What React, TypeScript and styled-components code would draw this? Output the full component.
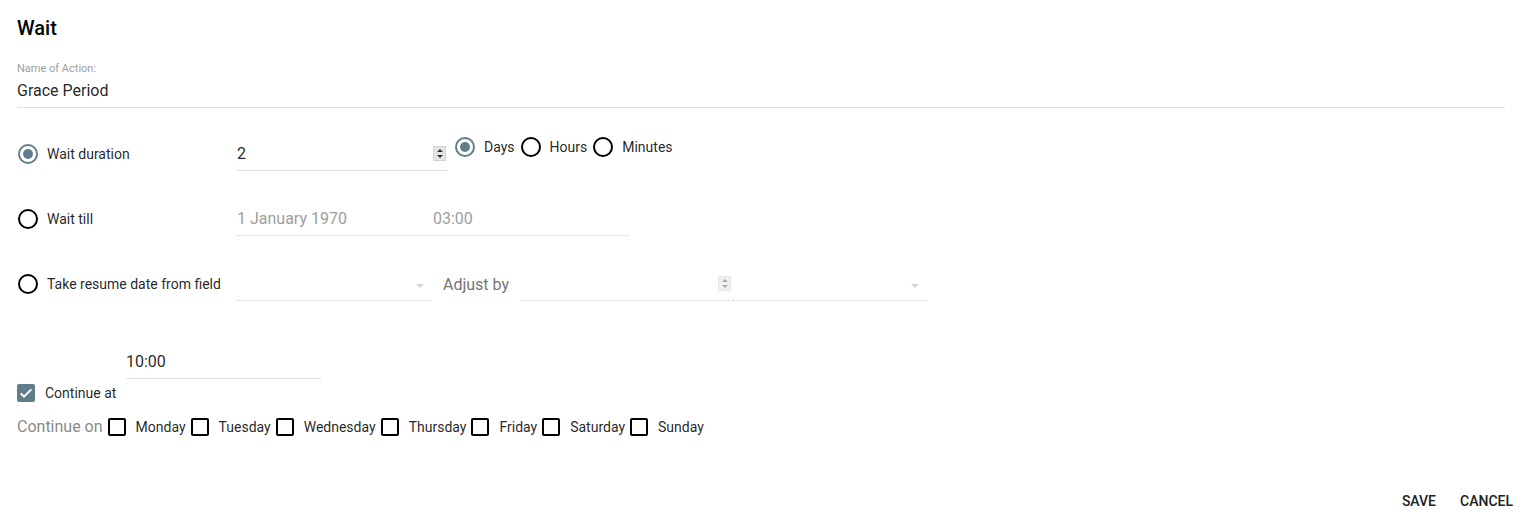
import React from "react";
import styled, { createGlobalStyle } from "styled-components";

const GlobalStyle = createGlobalStyle`
  html, body { margin: 0; padding: 0; background: #fff; }
  body { font-family: Roboto, "Liberation Sans", Arial, sans-serif; color: rgba(0,0,0,0.87); }
  * { box-sizing: border-box; }
`;

const ACCENT = "#607d8b";

const Page = styled.div`
  width: 1526px;
  height: 518px;
  padding: 16px 21px 0 17px;
  display: flex;
  flex-direction: column;
`;

const Title = styled.div`
  font-size: 20px;
  line-height: 24px;
  font-weight: 500;
  color: #000;
`;

const SmallLabel = styled.div`
  margin-top: 22px;
  font-size: 11px;
  line-height: 13px;
  color: #9e9e9e;
`;

const NameInput = styled.div`
  margin-top: 6px;
  font-size: 16px;
  line-height: 20px;
  padding-bottom: 6px;
  border-bottom: 1px solid #e0e0e0;
`;

const Row = styled.div<{ $top: number }>`
  display: flex;
  align-items: flex-start;
  margin-top: ${(p) => p.$top}px;
  height: 27px;
`;

const OptionLabel = styled.label`
  width: 220px;
  display: flex;
  align-items: center;
  height: 20px;
  font-size: 14px;
  line-height: 20px;
  gap: 9px;
  padding-left: 1px;
`;

const Radio = styled.span<{ $checked?: boolean }>`
  width: 20px;
  height: 20px;
  border-radius: 50%;
  border: 2px solid ${(p) => (p.$checked ? ACCENT : "#000")};
  display: inline-flex;
  align-items: center;
  justify-content: center;
  flex: none;
  &::after {
    content: "";
    width: 10px;
    height: 10px;
    border-radius: 50%;
    background: ${(p) => (p.$checked ? ACCENT : "transparent")};
  }
`;

const Field = styled.div<{ $width: number; $dotted?: boolean; $muted?: boolean }>`
  width: ${(p) => p.$width}px;
  height: 27px;
  display: flex;
  align-items: flex-start;
  font-size: 16px;
  line-height: 20px;
  padding-bottom: 6px;
  border-bottom: 1px ${(p) => (p.$dotted ? "dotted #d0d0d0" : "solid #e0e0e0")};
  color: ${(p) => (p.$muted ? "#9e9e9e" : "rgba(0,0,0,0.87)")};
  position: relative;
`;

const FieldText = styled.span<{ $width?: number }>`
  flex: ${(p) => (p.$width ? "none" : "1")};
  width: ${(p) => (p.$width ? `${p.$width}px` : "auto")};
`;

const Spinner = styled.span<{ $faded?: boolean }>`
  width: 13px;
  height: 15px;
  margin-top: 2px;
  margin-right: 2px;
  background: ${(p) => (p.$faded ? "#f0f0f0" : "#e4e4e4")};
  border: 1px solid ${(p) => (p.$faded ? "#e6e6e6" : "#d4d4d4")};
  display: flex;
  flex-direction: column;
  align-items: center;
  justify-content: space-around;
  flex: none;
`;

const Tri = styled.span<{ $down?: boolean; $faded?: boolean }>`
  width: 0;
  height: 0;
  border-left: 3px solid transparent;
  border-right: 3px solid transparent;
  ${(p) =>
    p.$down
      ? `border-top: 3px solid ${p.$faded ? "#aaa" : "#333"};`
      : `border-bottom: 3px solid ${p.$faded ? "#aaa" : "#333"};`}
`;

const SelectArrow = styled.span`
  position: absolute;
  right: 8px;
  top: 10px;
  width: 0;
  height: 0;
  border-left: 4px solid transparent;
  border-right: 4px solid transparent;
  border-top: 4px solid #d6d6d6;
`;

const UnitGroup = styled.div`
  display: flex;
  align-items: center;
  margin-top: -7px;
  margin-left: 7px;
  height: 20px;
  font-size: 14px;
  line-height: 20px;
`;

const UnitOption = styled.label`
  display: flex;
  align-items: center;
  gap: 9px;
  margin-right: 6px;
`;

const InlineLabel = styled.span`
  width: 77px;
  margin-left: 11px;
  font-size: 16px;
  line-height: 20px;
  color: #757575;
  padding-top: 1px;
`;

const TimeRow = styled.div`
  margin-top: 51px;
  padding-left: 109px;
`;

const CheckRow = styled.label`
  margin-top: 4px;
  display: flex;
  align-items: center;
  height: 20px;
  gap: 10px;
  font-size: 14px;
  line-height: 20px;
`;

const Checkbox = styled.span<{ $checked?: boolean }>`
  width: 18px;
  height: 18px;
  border-radius: 2px;
  flex: none;
  display: inline-flex;
  align-items: center;
  justify-content: center;
  background: ${(p) => (p.$checked ? ACCENT : "transparent")};
  border: ${(p) => (p.$checked ? "none" : "2px solid #000")};
`;

const DaysRow = styled.div`
  margin-top: 14px;
  display: flex;
  align-items: center;
  height: 20px;
  font-size: 14px;
  line-height: 20px;
`;

const DaysLabel = styled.span`
  font-size: 16px;
  color: #8a8a8a;
  margin-right: 5px;
`;

const DayOption = styled.label`
  display: flex;
  align-items: center;
  gap: 10px;
  margin-right: 5px;
`;

const Footer = styled.div`
  margin-top: 54px;
  margin-right: -8px;
  display: flex;
  justify-content: flex-end;
  gap: 24px;
`;

const TextButton = styled.button`
  border: none;
  background: none;
  padding: 0;
  font-family: Roboto, "Liberation Sans", Arial, sans-serif;
  font-size: 14px;
  line-height: 20px;
  font-weight: 500;
  color: #212121;
  text-transform: uppercase;
  cursor: pointer;
`;

const Check = () => (
  <svg width="16" height="16" viewBox="0 0 24 24">
    <path d="M4 12.5l5 5L20 6.5" fill="none" stroke="#fff" strokeWidth="3" />
  </svg>
);

const days = ["Monday", "Tuesday", "Wednesday", "Thursday", "Friday", "Saturday", "Sunday"];

export default function App() {
  return (
    <>
      <GlobalStyle />
      <Page>
        <Title>Wait</Title>
        <SmallLabel>Name of Action:</SmallLabel>
        <NameInput>Grace Period</NameInput>

        <Row $top={36}>
          <OptionLabel>
            <Radio $checked />
            Wait duration
          </OptionLabel>
          <Field $width={211}>
            <FieldText>2</FieldText>
            <Spinner>
              <Tri />
              <Tri $down />
            </Spinner>
          </Field>
          <UnitGroup>
            <UnitOption>
              <Radio $checked />
              Days
            </UnitOption>
            <UnitOption>
              <Radio />
              Hours
            </UnitOption>
            <UnitOption>
              <Radio />
              Minutes
            </UnitOption>
          </UnitGroup>
        </Row>

        <Row $top={38}>
          <OptionLabel>
            <Radio />
            Wait till
          </OptionLabel>
          <Field $width={391} $dotted $muted>
            <FieldText $width={196}>1 January 1970</FieldText>
            <FieldText>03:00</FieldText>
          </Field>
        </Row>

        <Row $top={38}>
          <OptionLabel>
            <Radio />
            Take resume date from field
          </OptionLabel>
          <Field $width={195} $dotted $muted>
            <FieldText />
            <SelectArrow />
          </Field>
          <InlineLabel>Adjust by</InlineLabel>
          <Field $width={213} $dotted $muted>
            <FieldText />
            <Spinner $faded>
              <Tri $faded />
              <Tri $down $faded />
            </Spinner>
          </Field>
          <Field $width={194} $dotted $muted>
            <FieldText />
            <SelectArrow />
          </Field>
        </Row>

        <TimeRow>
          <Field $width={195}>
            <FieldText>10:00</FieldText>
          </Field>
        </TimeRow>
        <CheckRow>
          <Checkbox $checked>
            <Check />
          </Checkbox>
          Continue at
        </CheckRow>

        <DaysRow>
          <DaysLabel>Continue on</DaysLabel>
          {days.map((d) => (
            <DayOption key={d}>
              <Checkbox />
              {d}
            </DayOption>
          ))}
        </DaysRow>

        <Footer>
          <TextButton>Save</TextButton>
          <TextButton>Cancel</TextButton>
        </Footer>
      </Page>
    </>
  );
}
